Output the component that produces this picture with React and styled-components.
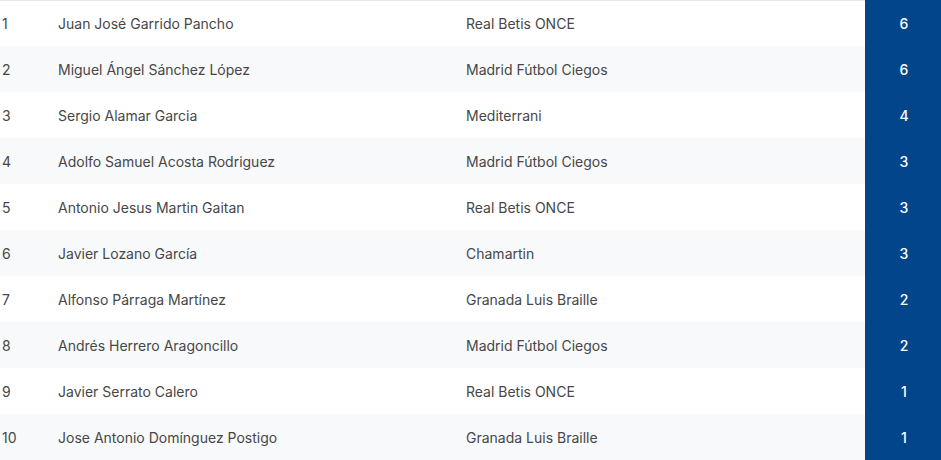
import React from "react";
import styled, { createGlobalStyle } from "styled-components";

const Global = createGlobalStyle`
  html, body { margin: 0; padding: 0; background: #fff; }
  body { font-family: Inter, "Noto Sans", Arial, sans-serif; }
`;

const Table = styled.div`
  width: 941px;
  display: grid;
  grid-template-columns: 58px 408px 399px 76px;
`;

const Row = styled.div`
  display: contents;
`;

const Cell = styled.div`
  height: 46px;
  box-sizing: border-box;
  display: flex;
  align-items: center;
  padding-left: ${(p) => p.$pad || 0}px;
  font-size: 14px;
  color: #474747;
  background: ${(p) => (p.$alt ? "#f8f9fb" : "#ffffff")};
  border-top: ${(p) => (p.$first ? "1px solid #e8e8ea" : "none")};
  padding-top: ${(p) => (p.$first ? "0px" : "1px")};
`;

const Goals = styled.div`
  height: 46px;
  display: flex;
  align-items: center;
  justify-content: center;
  padding-left: 2px;
  padding-top: 1px;
  box-sizing: border-box;
  background: #02458a;
  color: #ffffff;
  font-size: 14px;
  font-weight: 500;
`;

const data = [
  ["Juan José Garrido Pancho", "Real Betis ONCE", 6],
  ["Miguel Ángel Sánchez López", "Madrid Fútbol Ciegos", 6],
  ["Sergio Alamar Garcia", "Mediterrani", 4],
  ["Adolfo Samuel Acosta Rodriguez", "Madrid Fútbol Ciegos", 3],
  ["Antonio Jesus Martin Gaitan", "Real Betis ONCE", 3],
  ["Javier Lozano García", "Chamartin", 3],
  ["Alfonso Párraga Martínez", "Granada Luis Braille", 2],
  ["Andrés Herrero Aragoncillo", "Madrid Fútbol Ciegos", 2],
  ["Javier Serrato Calero", "Real Betis ONCE", 1],
  ["Jose Antonio Domínguez Postigo", "Granada Luis Braille", 1],
];

export default function App() {
  return (
    <>
      <Global />
      <Table>
        {data.map(([name, club, goals], i) => {
          const alt = i % 2 === 1;
          const first = i === 0;
          return (
            <Row key={i}>
              <Cell $alt={alt} $first={first} $pad={2}>{i + 1}</Cell>
              <Cell $alt={alt} $first={first}>{name}</Cell>
              <Cell $alt={alt} $first={first}>{club}</Cell>
              <Goals>{goals}</Goals>
            </Row>
          );
        })}
      </Table>
    </>
  );
}
